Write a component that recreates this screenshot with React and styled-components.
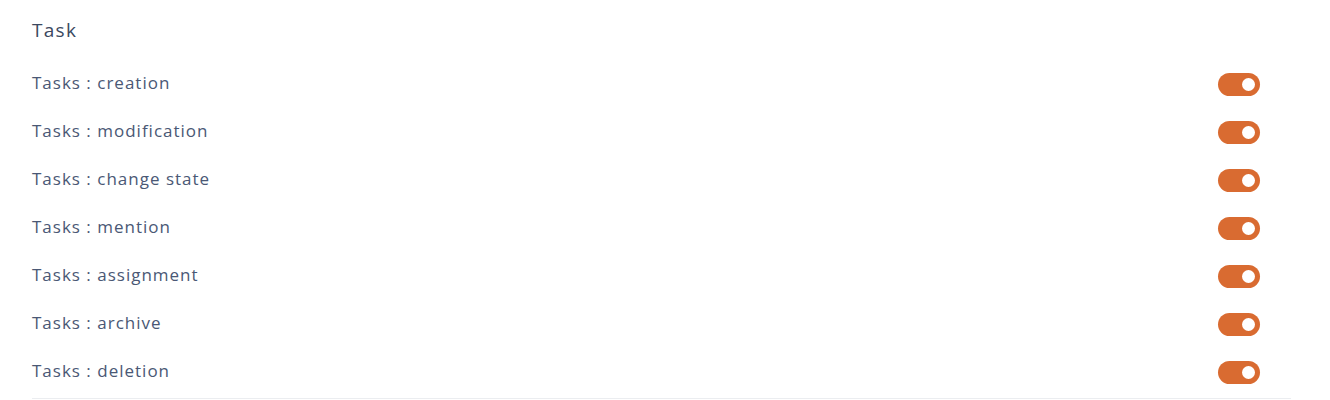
import React, { useState } from 'react';
import styled, { createGlobalStyle } from 'styled-components';

const GlobalStyle = createGlobalStyle`
  body {
    margin: 0;
    background: #ffffff;
    font-family: "Open Sans", "Noto Sans", sans-serif;
  }
`;

const initialSettings = [
  { key: 'creation', label: 'Tasks : creation' },
  { key: 'modification', label: 'Tasks : modification' },
  { key: 'state', label: 'Tasks : change state' },
  { key: 'mention', label: 'Tasks : mention' },
  { key: 'assignment', label: 'Tasks : assignment' },
  { key: 'archive', label: 'Tasks : archive' },
  { key: 'deletion', label: 'Tasks : deletion' },
];

export default function App() {
  const [enabled, setEnabled] = useState(
    Object.fromEntries(initialSettings.map((s) => [s.key, true]))
  );

  const toggle = (key) =>
    setEnabled((prev) => ({ ...prev, [key]: !prev[key] }));

  return (
    <>
      <GlobalStyle />
      <Section>
        <SectionTitle>Task</SectionTitle>
        <List>
          {initialSettings.map((s) => (
            <Row key={s.key}>
              <RowLabel>{s.label}</RowLabel>
              <Switch
                type="button"
                role="switch"
                aria-checked={enabled[s.key]}
                $on={enabled[s.key]}
                onClick={() => toggle(s.key)}
              >
                <Knob $on={enabled[s.key]} />
              </Switch>
            </Row>
          ))}
        </List>
      </Section>
    </>
  );
}

const Section = styled.section`
  margin: 0 39px 0 32px;
  padding-top: 18px;
  padding-bottom: 2px;
  border-bottom: 1px solid #ebedf0;
`;

const SectionTitle = styled.h3`
  margin: 0 0 18px;
  font-size: 19px;
  font-weight: 500;
  line-height: 24px;
  letter-spacing: 1.3px;
  color: #3b4860;
`;

const List = styled.div`
  display: flex;
  flex-direction: column;
`;

const Row = styled.div`
  display: flex;
  align-items: center;
  justify-content: space-between;
  height: 48px;
  padding-right: 31px;
`;

const RowLabel = styled.span`
  font-size: 17px;
  letter-spacing: 1px;
  color: #4a5875;
  margin-top: -4px;
`;

const Switch = styled.button`
  position: relative;
  width: 42px;
  height: 23px;
  padding: 0;
  border: none;
  border-radius: 12px;
  background: ${({ $on }) => ($on ? '#d96b31' : '#d1d5db')};
  cursor: pointer;
`;

const Knob = styled.span`
  position: absolute;
  top: 5px;
  left: ${({ $on }) => ($on ? '24px' : '5px')};
  width: 13px;
  height: 13px;
  border-radius: 50%;
  background: #ffffff;
  transition: left 0.15s ease;
`;
